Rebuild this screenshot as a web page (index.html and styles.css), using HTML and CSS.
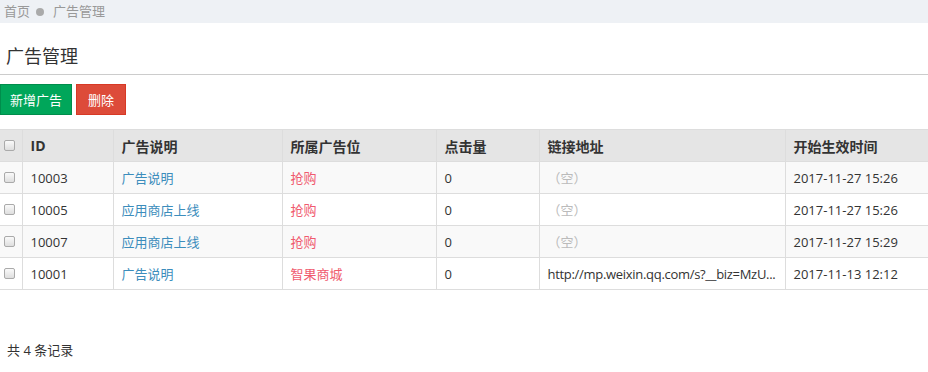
FILE: index.html
```html
<!DOCTYPE html>
<html lang="zh-CN">
<head>
<meta charset="UTF-8">
<title>广告管理</title>
<link rel="stylesheet" href="styles.css">
</head>
<body>
<div class="crumbs">
  <span>首页</span>
  <span class="dot"></span>
  <span>广告管理</span>
</div>

<h3 class="page-title">广告管理</h3>

<div class="toolbar">
  <button class="btn btn-green">新增广告</button>
  <button class="btn btn-red">删除</button>
</div>

<table class="grid">
  <colgroup>
    <col style="width:22px">
    <col style="width:91px">
    <col style="width:169px">
    <col style="width:154px">
    <col style="width:103px">
    <col style="width:246px">
    <col>
  </colgroup>
  <thead>
    <tr>
      <th class="chk"><span class="box"></span></th>
      <th>ID</th>
      <th>广告说明</th>
      <th>所属广告位</th>
      <th>点击量</th>
      <th>链接地址</th>
      <th>开始生效时间</th>
    </tr>
  </thead>
  <tbody>
    <tr>
      <td class="chk"><span class="box"></span></td>
      <td>10003</td>
      <td class="blue">广告说明</td>
      <td class="pink">抢购</td>
      <td>0</td>
      <td class="empty">（空）</td>
      <td>2017-11-27 15:26</td>
    </tr>
    <tr>
      <td class="chk"><span class="box"></span></td>
      <td>10005</td>
      <td class="blue">应用商店上线</td>
      <td class="pink">抢购</td>
      <td>0</td>
      <td class="empty">（空）</td>
      <td>2017-11-27 15:26</td>
    </tr>
    <tr>
      <td class="chk"><span class="box"></span></td>
      <td>10007</td>
      <td class="blue">应用商店上线</td>
      <td class="pink">抢购</td>
      <td>0</td>
      <td class="empty">（空）</td>
      <td>2017-11-27 15:29</td>
    </tr>
    <tr>
      <td class="chk"><span class="box"></span></td>
      <td>10001</td>
      <td class="blue">广告说明</td>
      <td class="pink">智果商城</td>
      <td>0</td>
      <td class="url">http://mp.weixin.qq.com/s?__biz=MzU...</td>
      <td>2017-11-13 12:12</td>
    </tr>
  </tbody>
</table>

<div class="total">共 4 条记录</div>
</body>
</html>
```

FILE: styles.css
```css
body { margin: 0; font-family: "Open Sans", "Noto Sans CJK SC", sans-serif; font-size: 13px; color: #333; background: #fff; }

.crumbs { height: 23px; line-height: 19px; background: #eef1f5; color: #999; padding-left: 4px; display: flex; align-items: center; }
.crumbs .dot { width: 8px; height: 8px; border-radius: 50%; background: #aaa; margin: 0 9px 0 6px; }

.page-title { margin: 0; padding: 21px 6px 6px; font-size: 18px; line-height: 24px; font-weight: normal; color: #333; border-bottom: 1px solid #ccc; }

.toolbar { display: flex; gap: 4px; margin-top: 9px; }
.btn { height: 31px; padding: 0 9px; font-family: inherit; font-size: 13px; color: #fff; border: 1px solid; border-radius: 0; }
.btn-green { background: #00a65a; border-color: #008d4c; }
.btn-red { background: #dd4b39; border-color: #d73925; padding: 0 11px; }

.grid { width: 100%; table-layout: fixed; border-collapse: collapse; margin-top: 14px; }
.grid th, .grid td { height: 31px; padding: 0 8px; text-align: left; border: 1px solid #ddd; border-left: none; white-space: nowrap; overflow: hidden; }
.grid th { background: #e5e5e5; font-weight: bold; font-size: 14px; color: #333; }
.grid td:last-child, .grid th:last-child { border-right: none; }
.grid tbody tr:nth-child(odd) td { background: #f9f9f9; }
.grid .chk { padding: 0 0 0 4px; }
.box { display: block; width: 9px; height: 9px; border: 1px solid #aaa; border-radius: 2px; background: linear-gradient(#fafafa, #dedede); }

.blue { color: #3c8dbc; }
.pink { color: #f05a6e; }
.empty { color: #bbb; }
.url { color: #333; letter-spacing: -0.3px; }

.total { margin-top: 50px; padding-left: 7px; line-height: 20px; }
```
